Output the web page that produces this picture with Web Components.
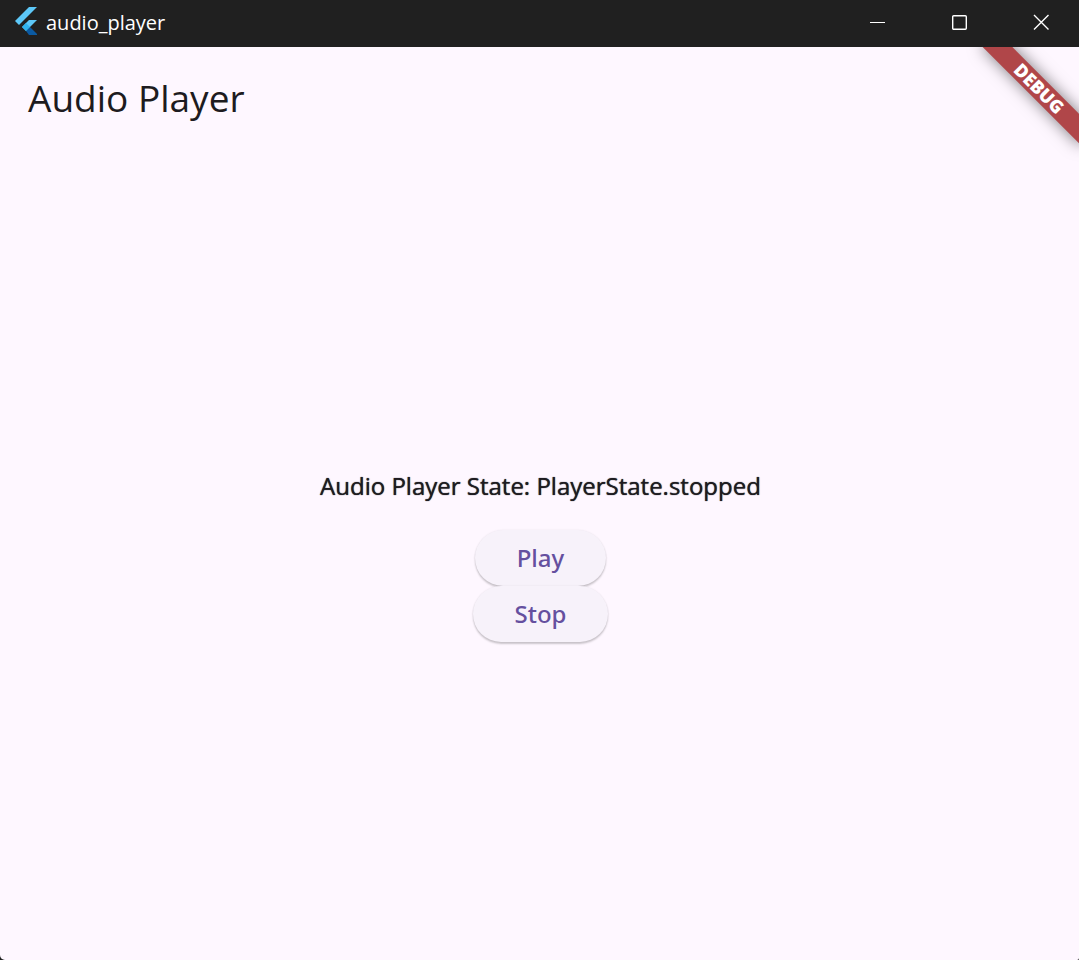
<!DOCTYPE html>
<html lang="en">
<head>
<meta charset="utf-8">
<title>audio_player</title>
<style>
html, body { height: 100%; margin: 0; }
body { background: #202020; font-family: "Open Sans", "Noto Sans", sans-serif; }
</style>
</head>
<body>
<app-window></app-window>
<script>
const define = (name, markup) => {
  const template = document.createElement('template');
  template.innerHTML = markup;
  customElements.define(name, class extends HTMLElement {
    constructor() {
      super();
      this.attachShadow({ mode: 'open' }).append(template.content.cloneNode(true));
    }
  });
};

define('flutter-logo', `
<style>
  :host { display: block; width: 22px; height: 28px; }
  svg { display: block; }
</style>
<svg width="22" height="28" viewBox="0 0 22 28" aria-hidden="true">
  <path d="M14 0H22L4 18L0 14Z" fill="#5dc8f8"/>
  <path d="M14 13H22L15 20L11 24L7 20Z" fill="#5dc8f8"/>
  <path d="M11 24L15 20L22 27V28H14Z" fill="#0b5aa2"/>
  <path d="M7 20L11 16L15 20L11 24Z" fill="#2fb3ee"/>
</svg>`);

define('caption-button', `
<style>
  :host { display: flex; width: 82px; }
  button { flex: 1; display: flex; align-items: center; justify-content: center; border: 0; padding: 0; background: none; color: #fff; }
  .icon { display: none; }
  :host([kind="minimize"]) .minimize, :host([kind="maximize"]) .maximize, :host([kind="close"]) .close { display: flex; }
</style>
<button type="button">
  <svg class="icon minimize" width="16" height="16" role="img" aria-label="Minimize"><path d="M1 8.5H16" stroke="#fff"/></svg>
  <svg class="icon maximize" width="16" height="16" role="img" aria-label="Maximize"><rect x="1.7" y="1.7" width="13.6" height="13.6" rx="1" fill="none" stroke="#fff" stroke-width="1.4"/></svg>
  <svg class="icon close" width="16" height="16" role="img" aria-label="Close"><path d="M1 1L15.5 15.5M15.5 1L1 15.5" stroke="#fff" stroke-width="1.4"/></svg>
</button>`);

define('title-bar', `
<style>
  :host { display: flex; height: 47px; padding-left: 15px; background: #202020; color: #fff; }
  .name { display: flex; flex: 1; align-items: center; gap: 9px; padding-bottom: 5px; font: 20px/28px "Open Sans", sans-serif; }
  .label { padding-top: 3px; }
  .controls { display: flex; padding-bottom: 4px; margin-right: -3px; }
</style>
<div class="name"><flutter-logo></flutter-logo><span class="label"><slot></slot></span></div>
<div class="controls">
  <caption-button kind="minimize"></caption-button>
  <caption-button kind="maximize"></caption-button>
  <caption-button kind="close"></caption-button>
</div>`);

define('debug-banner', `
<style>
  :host { position: absolute; top: 0; right: 0; width: 144px; height: 144px; overflow: hidden; pointer-events: none; }
  .band { position: absolute; top: 31px; right: -30px; width: 140px; height: 21px; transform: rotate(45deg);
    background: #b04649; box-shadow: 0 0 16px rgba(0, 0, 0, .5); color: #fff;
    font: 800 18px/21px "Open Sans", sans-serif; text-align: center; }
</style>
<div class="band">DEBUG</div>`);

define('elevated-button', `
<style>
  :host { display: block; }
  button { display: block; height: 56px; padding: 0 42px; border: 0; border-radius: 28px; background: #f7f2fa;
    box-shadow: 0 2px 2px rgba(0, 0, 0, .2), 0 0 2px rgba(0, 0, 0, .08); color: #65509f;
    font: 500 24px/36px "Noto Sans", sans-serif; }
</style>
<button type="button"><slot></slot></button>`);

define('audio-player', `
<style>
  :host { position: relative; display: flex; flex-direction: column; flex: 1; background: #fef7ff; color: #1d1b20;
    border-radius: 0 0 2px 5px; }
  header { display: flex; align-items: center; height: 98px; padding: 4px 28px 0; box-sizing: border-box; }
  h1 { margin: 0; font: 400 37px/48px "Open Sans", sans-serif; }
  main { flex: 1; display: flex; flex-direction: column; align-items: center; justify-content: center; padding-left: 2px; }
  p { margin: 0 0 22px; font: 500 24px/44px "Open Sans", sans-serif; text-shadow: 0 0 1px currentColor; }
</style>
<header><h1>Audio Player</h1></header>
<main>
  <p>Audio Player State: PlayerState.stopped</p>
  <elevated-button>Play</elevated-button>
  <elevated-button>Stop</elevated-button>
</main>
<debug-banner></debug-banner>`);

define('app-window', `
<style>:host { display: flex; flex-direction: column; min-height: 100vh; }</style>
<title-bar>audio_player</title-bar>
<audio-player></audio-player>`);
</script>
</body>
</html>
